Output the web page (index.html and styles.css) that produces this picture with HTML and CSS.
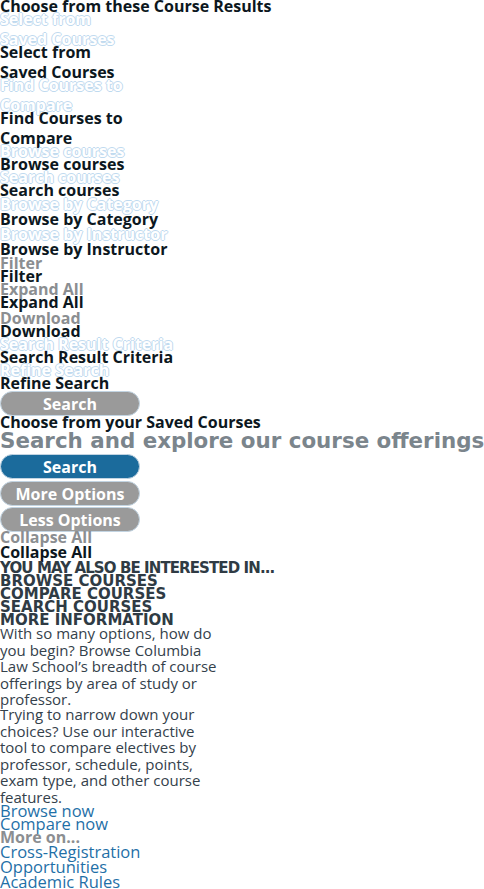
FILE: index.html
```html
<!DOCTYPE html>
<html lang="en">
<head>
<meta charset="utf-8">
<title>Course Search</title>
<link rel="stylesheet" href="styles.css">
</head>
<body>
<div class="page">
  <div class="item ink">Choose from these Course Results</div>
  <div class="item ghost wrap">Select from Saved Courses</div>
  <div class="item ink wrap">Select from Saved Courses</div>
  <div class="item ghost wrap">Find Courses to Compare</div>
  <div class="item ink wrap">Find Courses to Compare</div>
  <div class="item ghost">Browse courses</div>
  <div class="item ink">Browse courses</div>
  <div class="item ghost">Search courses</div>
  <div class="item ink">Search courses</div>
  <div class="item ghost roomy">Browse by Category</div>
  <div class="item ink roomy">Browse by Category</div>
  <div class="item ghost roomy">Browse by Instructor</div>
  <div class="item ink roomy">Browse by Instructor</div>
  <div class="item muted">Filter</div>
  <div class="item ink">Filter</div>
  <div class="item muted">Expand All</div>
  <div class="item ink">Expand All</div>
  <div class="item muted push-3">Download</div>
  <div class="item ink">Download</div>
  <div class="item ghost">Search Result Criteria</div>
  <div class="item ink">Search Result Criteria</div>
  <div class="item ghost">Refine Search</div>
  <div class="item ink">Refine Search</div>
  <button type="button" class="btn btn-gray push-1">Search</button>
  <div class="item ink">Choose from your Saved Courses</div>
  <h1 class="headline">Search and explore our course offerings</h1>
  <button type="button" class="btn btn-blue push-3">Search</button>
  <button type="button" class="btn btn-gray push-2">More Options</button>
  <button type="button" class="btn btn-gray push-1">Less Options</button>
  <div class="item muted pull-1">Collapse All</div>
  <div class="item ink push-2">Collapse All</div>
  <div class="caps caps-tight push-3">YOU MAY ALSO BE INTERESTED IN...</div>
  <div class="caps">BROWSE COURSES</div>
  <div class="caps">COMPARE COURSES</div>
  <div class="caps">SEARCH COURSES</div>
  <div class="caps">MORE INFORMATION</div>
  <p class="para">With so many options, how do you begin? Browse Columbia Law School’s breadth of course offerings by area of study or professor.</p>
  <p class="para">Trying to narrow down your choices? Use our interactive tool to compare electives by professor, schedule, points, exam type, and other course features.</p>
  <a class="link pull-2" href="#">Browse now</a>
  <a class="link" href="#">Compare now</a>
  <div class="item muted push-1">More on...</div>
  <a class="link link-wide" href="#">Cross-Registration Opportunities</a>
  <a class="link link-wide" href="#">Academic Rules</a>
</div>
</body>
</html>
```

FILE: styles.css
```css
* {
  box-sizing: border-box;
}

body {
  margin: 0;
  background: #ffffff;
  font-family: "Open Sans", "Liberation Sans", sans-serif;
}

.page {
  display: flex;
  flex-direction: column;
  align-items: flex-start;
}

.item {
  font-size: 16px;
  font-weight: 700;
  line-height: 13px;
  white-space: nowrap;
}

.ink {
  color: #0c1720;
}

.ghost {
  color: #ffffff;
  text-shadow:
    1px 0 0 #bfdaef,
    -1px 0 0 #bfdaef,
    0 1px 0 #bfdaef,
    0 -1px 0 #bfdaef;
}

.muted {
  color: #8b8e91;
}

.wrap {
  white-space: normal;
  width: 132px;
  line-height: 20px;
  margin-top: -4px;
  margin-bottom: -3px;
}

.roomy {
  line-height: 15px;
}

.push-1 { margin-top: 1px; }
.push-2 { margin-top: 2px; }
.push-3 { margin-top: 3px; }
.pull-1 { margin-top: -1px; }
.pull-2 { margin-top: -2px; }

.btn {
  display: flex;
  align-items: center;
  justify-content: center;
  width: 140px;
  height: 25px;
  padding: 0;
  border: 1px solid #c2d4e2;
  border-radius: 13px;
  font-family: "Open Sans", "Liberation Sans", sans-serif;
  font-size: 16px;
  font-weight: 700;
  line-height: 1;
  color: #ffffff;
  cursor: pointer;
}

.btn-gray {
  background: #9a9a9a;
}

.btn-blue {
  background: #1b6b9c;
}

.headline {
  margin: 2px 0 0;
  font-family: "DejaVu Sans", "Open Sans", sans-serif;
  font-size: 21.4px;
  font-weight: 700;
  line-height: 20px;
  color: #7b858c;
  white-space: nowrap;
}

.caps {
  font-family: "DejaVu Sans", "Open Sans", sans-serif;
  font-size: 15px;
  font-weight: 700;
  line-height: 13px;
  color: #2f3b44;
  white-space: nowrap;
}

.caps-tight {
  letter-spacing: -0.9px;
}

.para {
  width: 223px;
  margin: -2px 0 0;
  font-size: 15px;
  line-height: 16.6px;
  color: #34414b;
}

.link {
  font-size: 16.5px;
  line-height: 13px;
  color: #1f70a7;
  text-decoration: none;
}

.link-wide {
  width: 223px;
  line-height: 15px;
}
```
